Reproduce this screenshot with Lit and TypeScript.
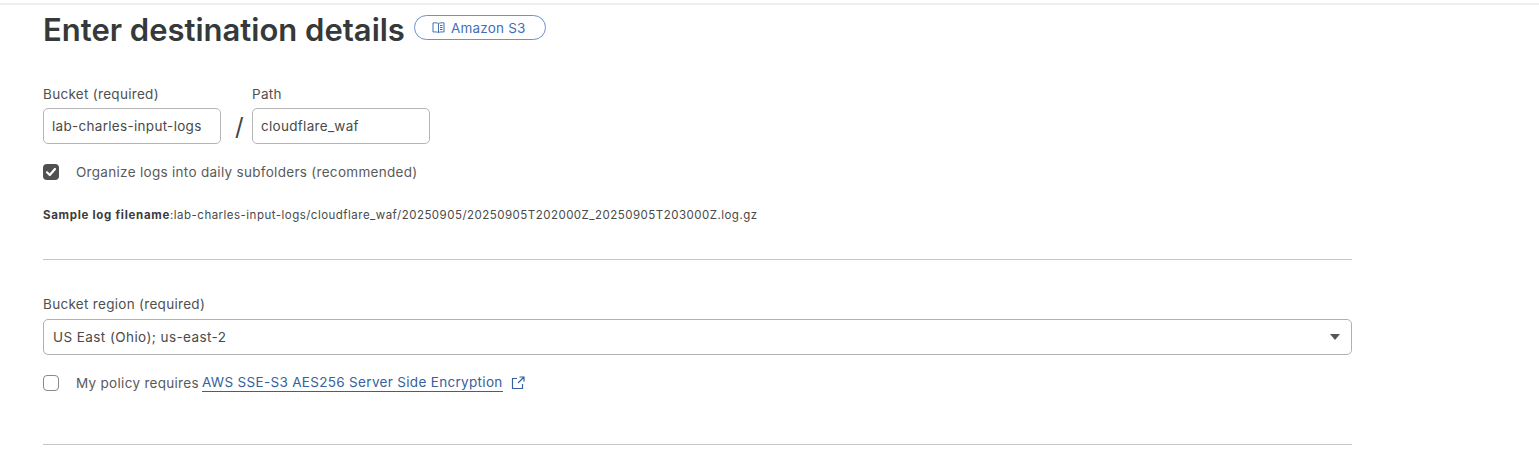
import { LitElement, html, css } from "lit";
import { customElement } from "lit/decorators.js";

@customElement("app-root")
export class AppRoot extends LitElement {
  static styles = css`
    :host {
      display: block;
      height: 467px;
      overflow: hidden;
      background: #fff;
      font-family: Inter, "Liberation Sans", sans-serif;
      color: #4a4a4a;
      font-size: 13.5px;
      letter-spacing: 0.3px;
      box-sizing: border-box;
    }
    .topline { height: 2px; margin-top: 3px; background: #eeeeee; }
    .main { width: 1309px; margin-left: 43px; display: flex; flex-direction: column; }
    .head { display: flex; align-items: center; gap: 9px; height: 50px; }
    h1 { margin: 0; font-size: 31px; line-height: 50px; font-weight: 600; color: #36393a; letter-spacing: 0; white-space: nowrap; }
    .badge {
      display: flex; align-items: center; gap: 6px; box-sizing: border-box;
      width: 132px; height: 25px; padding-left: 17px; margin-top: -5px;
      border: 1px solid #6d92c9; border-radius: 13px;
      color: #3e6fb8; font-size: 13.5px; letter-spacing: 0.2px;
    }
    .badge svg { display: block; }
    .paths { display: flex; margin-top: 31px; align-items: flex-end; }
    .field { display: flex; flex-direction: column; gap: 6px; }
    label, .label { line-height: 16px; color: #505050; }
    .input {
      box-sizing: border-box; height: 36px; width: 178px; padding: 0 8px;
      border: 1px solid #b5b5b5; border-radius: 5px;
      display: flex; align-items: center; color: #4a4a4a;
    }
    .slash { width: 31px; height: 36px; padding-left: 6px; box-sizing: border-box; display: flex; align-items: center; justify-content: center; font-size: 24px; color: #444; font-weight: 400; }
    .check { display: flex; align-items: center; gap: 17px; height: 16px; color: #5a5a5a; }
    .box { width: 16px; height: 16px; box-sizing: border-box; border-radius: 4px; flex: none; }
    .box.on { background: #505050; display: flex; align-items: center; justify-content: center; }
    .box.off { border: 1px solid #8a8a8a; }
    .c1 { margin-top: 20px; }
    .sample { margin-top: 28px; font-size: 11.5px; letter-spacing: 0.48px; line-height: 14px; color: #4a4a4a; white-space: nowrap; }
    .sample b { font-weight: 700; color: #3c3c3c; letter-spacing: 0.7px; }
    hr { width: 100%; margin: 0; border: 0; height: 1px; background: #c6c6c6; }
    .h1 { margin-top: 37px; }
    .region { margin-top: 36px; display: flex; flex-direction: column; gap: 7px; }
    .select {
      box-sizing: border-box; height: 36px; padding: 0 11px 0 9px;
      border: 1px solid #b0b0b0; border-radius: 5px;
      display: flex; align-items: center; justify-content: space-between; letter-spacing: 0.42px; color: #4a4a4a;
    }
    .arrow { width: 0; height: 0; border-left: 5px solid transparent; border-right: 5px solid transparent; border-top: 6px solid #555; }
    .c2 { margin-top: 20px; }
    .policy { display: flex; align-items: center; gap: 3px; }
    a { color: #35619f; text-decoration: none; border-bottom: 1px solid #35619f; line-height: 17px; letter-spacing: 0.32px; }
    .ext { margin-left: 4px; display: block; }
    .h2 { margin-top: 53px; }
  `;

  render() {
    return html`
      <div class="topline"></div>
      <div class="main">
        <div class="head">
          <h1>Enter destination details</h1>
          <div class="badge">
            <svg width="13" height="13" viewBox="0 0 13 13" fill="none" stroke="#3e6fb8" stroke-width="1">
              <path d="M6.5 2.5C5.5 1.8 3 1.7 1 1.9V11C3 10.8 5.5 10.9 6.5 11.6C7.5 10.9 10 10.8 12 11V1.9C10 1.7 7.5 1.8 6.5 2.5ZM6.5 2.5V11.6M8 4.5H10.5M8 6.5H10.5M8 8.5H10.5" />
            </svg>
            Amazon S3
          </div>
        </div>
        <div class="paths">
          <div class="field">
            <label>Bucket (required)</label>
            <div class="input">lab-charles-input-logs</div>
          </div>
          <div class="slash">/</div>
          <div class="field">
            <label>Path</label>
            <div class="input">cloudflare_waf</div>
          </div>
        </div>
        <div class="check c1">
          <div class="box on">
            <svg width="12" height="12" viewBox="0 0 12 12" fill="none" stroke="#fff" stroke-width="2.2" stroke-linecap="round" stroke-linejoin="round"><path d="M2 6.3L4.8 9L10 3" /></svg>
          </div>
          <span>Organize logs into daily subfolders (recommended)</span>
        </div>
        <div class="sample"><b>Sample log filename</b>:lab-charles-input-logs/cloudflare_waf/20250905/20250905T202000Z_20250905T203000Z.log.gz</div>
        <hr class="h1" />
        <div class="region">
          <div class="label">Bucket region (required)</div>
          <div class="select"><span>US East (Ohio); us-east-2</span><span class="arrow"></span></div>
        </div>
        <div class="check c2">
          <div class="box off"></div>
          <div class="policy">
            <span>My policy requires</span>
            <a>AWS SSE-S3 AES256 Server Side Encryption</a>
            <svg class="ext" width="16" height="16" viewBox="0 0 16 16" fill="none" stroke="#35619f" stroke-width="1.2">
              <path d="M7 3.5H2.5V13.5H12.5V9M9.5 2H14V6.5M14 2L8 8" />
            </svg>
          </div>
        </div>
        <hr class="h2" />
      </div>
    `;
  }
}
